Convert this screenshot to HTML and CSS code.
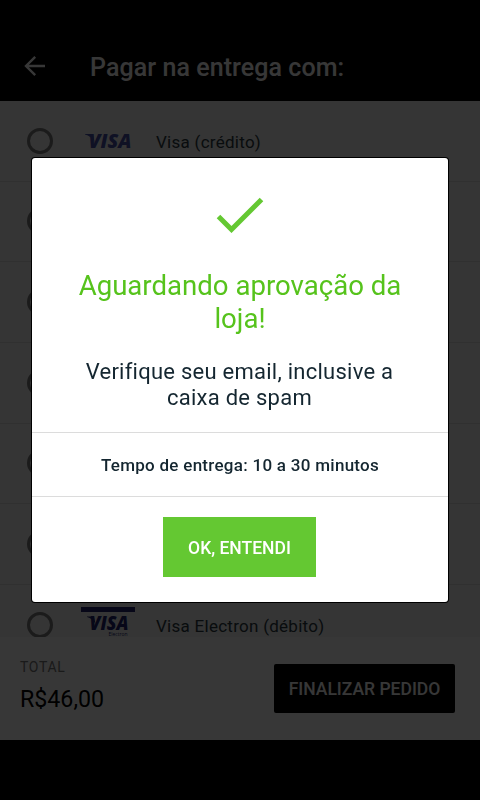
FILE: index.html
```
<!DOCTYPE html>
<html lang="pt-BR">
<head>
  <meta charset="UTF-8">
  <meta name="viewport" content="width=device-width, initial-scale=1.0">
  <title>Pagar na entrega</title>
  <link rel="stylesheet" href="styles.css">
</head>
<body>
  <div class="screen">
    <header class="topbar">
      <svg class="back" viewBox="0 0 22 22" width="22" height="22">
        <path d="M21 11H2.5M11.2 1.8L2 11l9.2 9.2" fill="none" stroke="currentColor" stroke-width="2.4"/>
      </svg>
      <h1>Pagar na entrega com:</h1>
    </header>

    <ul class="payments">
      <li>
        <span class="radio"></span>
        <svg class="brand" viewBox="0 0 56 38" width="56" height="38">
          <path class="wing" d="M5 12h8l1.5 8C12.5 16 9 13.5 5 12.5z"/>
          <text x="8.5" y="26" font-size="19.5" textLength="43" lengthAdjust="spacingAndGlyphs">VISA</text>
        </svg>
        <span class="name">Visa (crédito)</span>
      </li>
      <li><span class="radio"></span></li>
      <li><span class="radio"></span></li>
      <li><span class="radio"></span></li>
      <li><span class="radio"></span></li>
      <li><span class="radio"></span></li>
      <li>
        <span class="radio"></span>
        <svg class="brand electron" viewBox="0 0 56 38" width="56" height="38">
          <rect x="1" y="1" width="54" height="5"/>
          <path class="wing" d="M7 10.5h7l1.5 7.5C13.5 14.5 11 12 7 11z"/>
          <text x="9.5" y="24" font-size="18.5" textLength="39" lengthAdjust="spacingAndGlyphs">VISA</text>
          <text class="sub" x="28.5" y="29.5" font-size="5.5" textLength="19" lengthAdjust="spacingAndGlyphs">Electron</text>
        </svg>
        <span class="name">Visa Electron (débito)</span>
      </li>
    </ul>

    <footer class="checkout">
      <div class="total">
        <span class="label">TOTAL</span>
        <span class="price">R$46,00</span>
      </div>
      <button class="finish">FINALIZAR PEDIDO</button>
    </footer>
  </div>

  <div class="overlay">
    <div class="modal">
      <div class="message">
        <svg class="check" viewBox="0 0 48 36" width="48" height="36">
          <path d="M2.5 19.5L15.5 32.5L45.5 2.5" fill="none" stroke="currentColor" stroke-width="5"/>
        </svg>
        <h2>Aguardando aprovação da loja!</h2>
        <p>Verifique seu email, inclusive a caixa de spam</p>
      </div>
      <div class="delivery">Tempo de entrega: 10 a 30 minutos</div>
      <div class="actions">
        <button class="ok">OK, ENTENDI</button>
      </div>
    </div>
  </div>
</body>
</html>
```

FILE: styles.css
```
* {
  box-sizing: border-box;
}

body {
  margin: 0;
  background: #000;
  font-family: Roboto, sans-serif;
  color: #142630;
  overflow: hidden;
}

h1, h2, p, ul {
  margin: 0;
  padding: 0;
}

button {
  border: 0;
  padding: 0;
  font-family: inherit;
  font-weight: 500;
  color: #fff;
}

.screen {
  display: flex;
  flex-direction: column;
  height: 740px;
}

.topbar {
  display: flex;
  align-items: center;
  height: 101px;
  padding: 31px 24px 0;
  background: #000;
  color: #fff;
}

.topbar h1 {
  margin-left: 44px;
  font-size: 25px;
  font-weight: 500;
  line-height: 30px;
  letter-spacing: 0.07px;
  padding-top: 3px;
}

.payments {
  flex: 1;
  min-height: 0;
  overflow: hidden;
  list-style: none;
  background: #f3f3f3;
}

.payments li {
  display: flex;
  align-items: center;
  height: 80.67px;
  padding-left: 27px;
  border-bottom: 1px solid #dedede;
}

.radio {
  width: 26px;
  height: 26px;
  border: 3px solid #7c7c7c;
  border-radius: 50%;
}

.brand {
  margin-left: 27px;
  background: #f6f6f6;
  fill: #4650a8;
  font-family: "Open Sans", sans-serif;
  font-style: italic;
  font-weight: 800;
}

.electron {
  fill: #20246e;
}

.brand .sub {
  font-style: normal;
  font-weight: 400;
}

.name {
  margin-left: 20px;
  font-size: 17px;
  letter-spacing: 0.27px;
  padding-top: 2px;
  color: #2c3b44;
}

.checkout {
  display: flex;
  justify-content: space-between;
  align-items: center;
  height: 103px;
  padding: 0 25px 0 20px;
  background: #fff;
}

.total {
  display: flex;
  flex-direction: column;
  padding-bottom: 6px;
}

.label {
  font-size: 14px;
  line-height: 20px;
  letter-spacing: 0.7px;
  color: #777;
}

.price {
  margin-top: 7px;
  font-size: 23.2px;
  line-height: 30px;
  color: #000;
}

.finish {
  width: 181px;
  height: 49px;
  border-radius: 2px;
  background: #000;
  font-size: 17.5px;
}

.overlay {
  position: fixed;
  inset: 0;
  padding: 158px 32px 0;
  background: rgba(0, 0, 0, 0.784);
}

.modal {
  height: 444px;
  border-radius: 3px;
  background: #fff;
  box-shadow: 0 0 0 1px #000;
  text-align: center;
}

.message {
  height: 275px;
  padding: 39px 40px 0;
  border-bottom: 1px solid #dcdcdc;
}

.check {
  display: block;
  margin: 0 auto;
  color: #64c832;
}

.message h2 {
  margin-top: 37px;
  font-size: 27.6px;
  font-weight: 400;
  line-height: 32.5px;
  color: #56c31c;
}

.message p {
  margin: 24px 1px 0 0;
  font-size: 22px;
  line-height: 26px;
  letter-spacing: 0.25px;
}

.delivery {
  height: 64px;
  border-bottom: 1px solid #dcdcdc;
  font-size: 17px;
  font-weight: 500;
  line-height: 64px;
  letter-spacing: 0.28px;
}

.actions {
  padding: 20px 2px 0 0;
}

.ok {
  width: 153px;
  height: 60px;
  padding: 1px 0 0 1px;
  background: #64c832;
  font-size: 17.5px;
}
```
